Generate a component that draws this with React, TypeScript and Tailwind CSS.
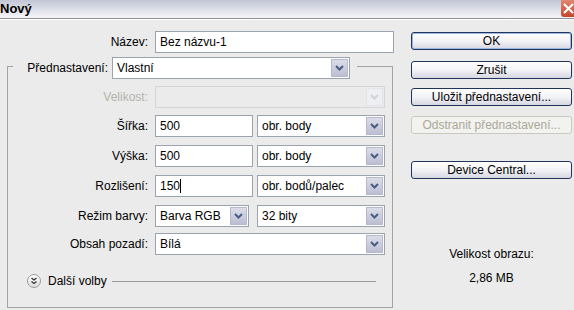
function Chevron({ disabled }: { disabled?: boolean }) {
  return (
    <svg width="9" height="6" viewBox="0 0 9 6">
      <polyline
        points="1,1 4.5,4.5 8,1"
        fill="none"
        stroke={disabled ? '#cfd3d9' : '#4a5d80'}
        strokeWidth="2"
      />
    </svg>
  );
}

interface SelectProps {
  value?: string;
  className: string;
  disabled?: boolean;
}

function Select({ value, className, disabled }: SelectProps) {
  return (
    <div
      className={`flex h-[22px] border ${
        disabled ? 'border-[#d3d6da] bg-[#ebebeb]' : 'border-[#9aa3ae] bg-white'
      } ${className}`}
    >
      <div className="flex-1 flex items-center pl-[4px] whitespace-nowrap overflow-hidden">
        {value}
      </div>
      <div
        className={`w-[17px] m-px flex items-center justify-center border ${
          disabled
            ? 'border-[#e2e4e8] bg-[#eeeff2]'
            : 'border-[#b6b9cc] bg-gradient-to-b from-[#dcdde9] to-[#bcbed3]'
        }`}
      >
        <Chevron disabled={disabled} />
      </div>
    </div>
  );
}

function Input({ value, className, caret }: { value: string; className: string; caret?: boolean }) {
  return (
    <div className={`flex items-center h-[22px] border border-[#9aa3ae] bg-white pl-[4px] ${className}`}>
      {value}
      {caret && <span className="w-px h-[14px] bg-black" />}
    </div>
  );
}

function Row({ label, children, className, disabled }: { label: string; children: React.ReactNode; className: string; disabled?: boolean }) {
  return (
    <div className={`flex items-center ${className}`}>
      <div className={`w-[140px] text-right ${disabled ? 'text-[#b4b4ae]' : ''}`}>{label}</div>
      <div className="ml-[7px] flex">{children}</div>
    </div>
  );
}

function Button({ label, className, disabled, primary }: { label: string; className: string; disabled?: boolean; primary?: boolean }) {
  return (
    <div
      className={`flex items-center justify-center h-[18px] rounded-[3px] border ${
        disabled
          ? 'border-[#cbc9bd] bg-[#f2f2ef] text-[#aca899]'
          : 'border-[#21345a] bg-gradient-to-b from-white via-[#f3f3f6] to-[#d6d7e2]'
      } ${primary ? 'shadow-[inset_0_0_0_1px_#9bb7e6]' : ''} ${className}`}
    >
      {label}
    </div>
  );
}

export default function App() {
  return (
    <div className="w-[574px] h-[310px] overflow-hidden bg-[#ebebeb] text-black text-[12px] leading-[15px] font-['Liberation_Sans',Arial,sans-serif] flex flex-col">
      {/* title bar */}
      <div className="h-[19px] flex justify-between bg-gradient-to-b from-[#c2c6d5] to-[#f6f6f9] border-b border-[#8d909c]">
        <div className="font-bold text-[13px] leading-[17px]">Nový</div>
        <div className="w-[13px] h-[17px] rounded-bl-[3px] bg-gradient-to-b from-[#e2876e] to-[#c2452b] flex items-center overflow-hidden">
          <svg width="13" height="17" viewBox="0 0 13 17">
            <path d="M3 4 L12 13 M12 4 L3 13" stroke="white" strokeWidth="2" />
          </svg>
        </div>
      </div>
      <div className="h-px bg-white" />

      <div className="flex flex-1">
        {/* left column */}
        <div className="w-[400px] flex flex-col">
          <div className="flex items-center mt-[11px]">
            <div className="w-[148px] text-right">Název:</div>
            <Input value="Bez názvu-1" className="ml-[7px] w-[239px]" />
          </div>

          <div className="ml-[7px] w-[386px] mt-[13px] flex flex-col border-x border-b border-[#a3a3a3]">
            <div className="-mt-[9px] flex items-center h-[22px]">
              <div className="w-[5px] h-px bg-[#a3a3a3] mt-[-3px]" />
              <div className="w-[95px] text-right">Přednastavení:</div>
              <Select value="Vlastní" className="ml-[4px] w-[238px]" />
              <div className="flex-1 ml-[7px] h-px bg-[#a3a3a3] mt-[-3px]" />
            </div>

            <Row label="Velikost:" className="mt-[7px]" disabled>
              <Select className="w-[230px]" disabled />
            </Row>
            <Row label="Šířka:" className="mt-[7px]">
              <Input value="500" className="w-[98px]" />
              <Select value="obr. body" className="ml-[4px] w-[128px]" />
            </Row>
            <Row label="Výška:" className="mt-[8px]">
              <Input value="500" className="w-[98px]" />
              <Select value="obr. body" className="ml-[4px] w-[128px]" />
            </Row>
            <Row label="Rozlišení:" className="mt-[8px]">
              <Input value="150" className="w-[98px]" caret />
              <Select value="obr. bodů/palec" className="ml-[4px] w-[128px]" />
            </Row>
            <Row label="Režim barvy:" className="mt-[8px]">
              <Select value="Barva RGB" className="w-[94px]" />
              <Select value="32 bity" className="ml-[8px] w-[128px]" />
            </Row>
            <Row label="Obsah pozadí:" className="mt-[6px]">
              <Select value="Bílá" className="w-[230px]" />
            </Row>

            <div className="flex items-center h-[14px] mt-[19px] mb-[19px]">
              <div className="ml-[19px] w-[14px] h-[14px] rounded-full border border-[#9a9a9a] bg-gradient-to-b from-white to-[#dedede] flex items-center justify-center">
                <svg width="8" height="8" viewBox="0 0 8 8">
                  <polyline points="1.5,1 4,3 6.5,1" fill="none" stroke="#333" strokeWidth="1.3" />
                  <polyline points="1.5,4.5 4,6.5 6.5,4.5" fill="none" stroke="#333" strokeWidth="1.3" />
                </svg>
              </div>
              <div className="ml-[7px]">Další volby</div>
              <div className="flex-1 ml-[5px] mr-[16px] h-px bg-[#9a9a9a]" />
            </div>
          </div>
        </div>

        {/* right column */}
        <div className="ml-[11px] w-[161px] flex flex-col">
          <Button label="OK" className="mt-[12px]" primary />
          <Button label="Zrušit" className="mt-[11px]" />
          <Button label="Uložit přednastavení..." className="mt-[9px]" />
          <Button label="Odstranit přednastavení..." className="mt-[10px]" disabled />
          <Button label="Device Central..." className="mt-[27px]" />
          <div className="mt-[68px] text-center">Velikost obrazu:</div>
          <div className="mt-[9px] text-center">2,86 MB</div>
        </div>
      </div>
    </div>
  );
}
